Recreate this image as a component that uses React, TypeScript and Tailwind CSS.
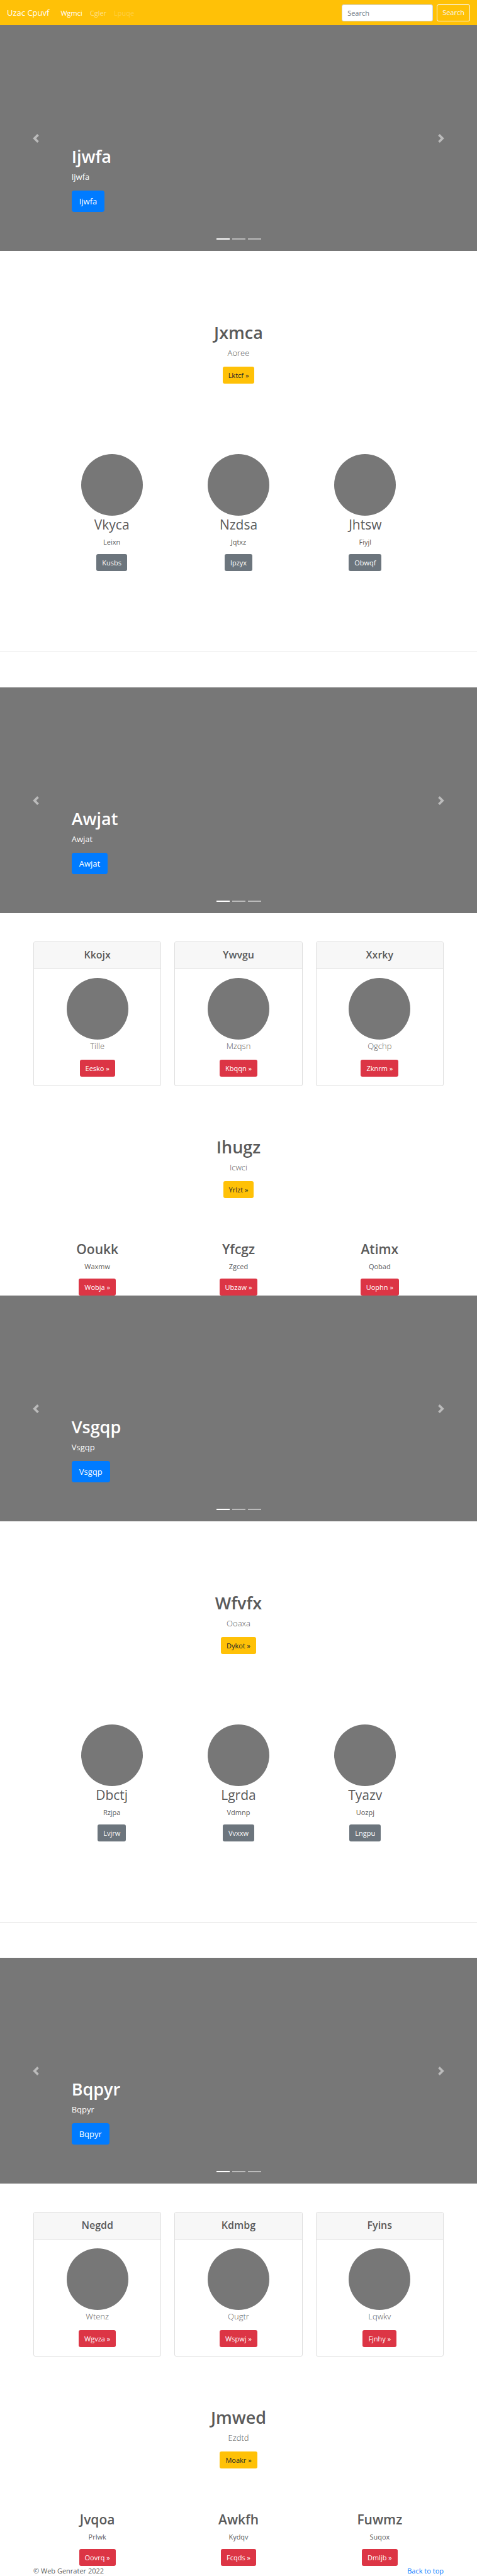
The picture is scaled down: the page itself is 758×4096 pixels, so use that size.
import type { ReactNode } from "react";

type Tone = "warning" | "secondary" | "danger";

const tones: Record<Tone, string> = {
  warning: "bg-[#ffc107] text-[#212529]",
  secondary: "bg-[#6c757d] text-white",
  danger: "bg-[#dc3545] text-white",
};

function Button({ tone, children }: { tone: Tone; children: ReactNode }) {
  return (
    <a href="#" className={`inline-block h-[27px] rounded-[3px] px-[9px] text-[11px] leading-[27px] ${tones[tone]}`}>
      {children}
    </a>
  );
}

function Navbar() {
  return (
    <nav className="flex h-[40px] items-center bg-[#ffc107] px-[11px]">
      <a href="#" className="mr-[12px] text-[13px] leading-[21px] text-white">Uzac Cpuvf</a>
      <div className="flex flex-1 text-[11px] leading-[17px]">
        <a href="#" className="px-[6px] text-white">Wgmci</a>
        <a href="#" className="px-[6px] text-white/50">Cgler</a>
        <a href="#" className="px-[6px] text-white/25">Lpuqe</a>
      </div>
      <form className="flex gap-[6px]" onSubmit={(e) => e.preventDefault()}>
        <input
          type="text"
          placeholder="Search"
          aria-label="Search"
          className="h-[27px] w-[145px] rounded-[3px] border border-[#ced4da] bg-white px-[8px] text-[11px] text-[#495057] placeholder:text-[#6c757d]"
        />
        <button type="submit" className="h-[27px] rounded-[3px] border border-[#f8f9fa] px-[8px] text-[11px] text-[#f8f9fa]">
          Search
        </button>
      </form>
    </nav>
  );
}

function Hero({ text }: { text: string }) {
  return (
    <section className="relative flex h-[359px] bg-[#777] text-white">
      <button type="button" aria-label="Previous" className="flex w-[15%] items-center justify-center opacity-50">
        <svg viewBox="0 0 8 8" className="size-[14px]" fill="#fff">
          <path d="M5.25 0l-4 4 4 4 1.5-1.5L4.25 4l2.5-2.5L5.25 0z" />
        </svg>
      </button>
      <div className="flex flex-1 flex-col items-start justify-end pb-[62px]">
        <h1 className="mb-[4px] text-[27px] font-semibold leading-[36px]">{text}</h1>
        <p className="mb-[11px] text-[13px] leading-[21px]">{text}</p>
        <a href="#" className="h-[34px] rounded-[4px] bg-[#007bff] px-[12px] text-[13px] leading-[34px]">{text}</a>
      </div>
      <button type="button" aria-label="Next" className="flex w-[15%] items-center justify-center opacity-50">
        <svg viewBox="0 0 8 8" className="size-[14px]" fill="#fff">
          <path d="M2.75 0l-1.5 1.5L3.75 4l-2.5 2.5L2.75 8l4-4-4-4z" />
        </svg>
      </button>
      <div className="absolute inset-x-0 bottom-[18px] flex justify-center gap-[4px]">
        <span className="h-[2px] w-[21px] bg-white" />
        <span className="h-[2px] w-[21px] bg-white/50" />
        <span className="h-[2px] w-[21px] bg-white/50" />
      </div>
    </section>
  );
}

function Intro({ title, lead, action }: { title: string; lead: string; action: string }) {
  return (
    <div className="flex flex-col items-center">
      <h2 className="mb-[4px] text-[27px] font-semibold leading-[36px]">{title}</h2>
      <p className="mb-[11px] text-[13px] font-light leading-[21px]">{lead}</p>
      <Button tone="warning">{action} »</Button>
    </div>
  );
}

type Item = [title: string, text: string, action: string];

function Circle() {
  return <div className="size-[98px] rounded-full bg-[#777]" />;
}

function Profiles({ items }: { items: Item[] }) {
  return (
    <div className="grid grid-cols-3 px-[77px]">
      {items.map(([title, text, action]) => (
        <div key={title} className="flex flex-col items-center">
          <Circle />
          <h2 className="mb-[5px] text-[21px] leading-[28px]">{title}</h2>
          <p className="mb-[11px] text-[11px] leading-[17px]">{text}</p>
          <Button tone="secondary">{action}</Button>
        </div>
      ))}
    </div>
  );
}

function Cards({ items }: { items: Item[] }) {
  return (
    <div className="grid grid-cols-3 gap-[21px] px-[53px]">
      {items.map(([title, text, action]) => (
        <article key={title} className="overflow-hidden rounded-[3px] border border-[#dfdfdf] text-center">
          <h4 className="border-b border-[#dfdfdf] bg-[#f7f7f7] pb-[12px] pt-[10px] text-[16px] font-semibold leading-[20px]">
            {title}
          </h4>
          <div className="flex flex-col items-center py-[14px]">
            <Circle />
            <p className="mb-[11px] text-[13px] font-light leading-[21px]">{text}</p>
            <Button tone="danger">{action} »</Button>
          </div>
        </article>
      ))}
    </div>
  );
}

function Features({ items }: { items: Item[] }) {
  return (
    <div className="grid grid-cols-3 gap-[21px] px-[53px]">
      {items.map(([title, text, action]) => (
        <div key={title} className="flex flex-col items-center">
          <h2 className="mb-[5px] text-[21px] font-semibold leading-[28px]">{title}</h2>
          <p className="mb-[11px] text-[11px] leading-[17px]">{text}</p>
          <Button tone="danger">{action} »</Button>
        </div>
      ))}
    </div>
  );
}

function ProfileSection({ intro, items }: { intro: Item; items: Item[] }) {
  return (
    <section className="flex flex-col gap-[112px] border-b border-[#e5e5e5] pb-[128px] pt-[112px]">
      <Intro title={intro[0]} lead={intro[1]} action={intro[2]} />
      <Profiles items={items} />
    </section>
  );
}

function CardSection({ cards, intro, features }: { cards: Item[]; intro: Item; features: Item[] }) {
  return (
    <section className="pt-[45px]">
      <Cards items={cards} />
      <div className="pb-[67px] pt-[79px]">
        <Intro title={intro[0]} lead={intro[1]} action={intro[2]} />
      </div>
      <Features items={features} />
    </section>
  );
}

export default function App() {
  return (
    <div className="bg-white font-['Open_Sans','Noto_Sans',sans-serif] text-[11px] text-[#5a5a5a]">
      <Navbar />
      <main>
        <Hero text="Ijwfa" />
        <ProfileSection
          intro={["Jxmca", "Aoree", "Lktcf"]}
          items={[
            ["Vkyca", "Leixn", "Kusbs"],
            ["Nzdsa", "Jqtxz", "Ipzyx"],
            ["Jhtsw", "Fiyjl", "Obwqf"],
          ]}
        />
        <div className="pt-[56px]">
          <Hero text="Awjat" />
        </div>
        <CardSection
          cards={[
            ["Kkojx", "Tille", "Eesko"],
            ["Ywvgu", "Mzqsn", "Kbqqn"],
            ["Xxrky", "Qgchp", "Zknrm"],
          ]}
          intro={["Ihugz", "Icwci", "Yrlzt"]}
          features={[
            ["Ooukk", "Waxmw", "Wobja"],
            ["Yfcgz", "Zgced", "Ubzaw"],
            ["Atimx", "Qobad", "Uophn"],
          ]}
        />
        <Hero text="Vsgqp" />
        <ProfileSection
          intro={["Wfvfx", "Ooaxa", "Dykot"]}
          items={[
            ["Dbctj", "Rzjpa", "Lvjrw"],
            ["Lgrda", "Vdmnp", "Vvxxw"],
            ["Tyazv", "Uozpj", "Lngpu"],
          ]}
        />
        <div className="pt-[56px]">
          <Hero text="Bqpyr" />
        </div>
        <CardSection
          cards={[
            ["Negdd", "Wtenz", "Wgvza"],
            ["Kdmbg", "Qugtr", "Wspwj"],
            ["Fyins", "Lqwkv", "Fjnhy"],
          ]}
          intro={["Jmwed", "Ezdtd", "Moakr"]}
          features={[
            ["Jvqoa", "Prlwk", "Oovrq"],
            ["Awkfh", "Kydqv", "Fcqds"],
            ["Fuwmz", "Suqox", "Dmljb"],
          ]}
        />
      </main>
      <footer className="flex justify-between px-[53px] leading-[16px]">
        <p>© Web Genrater 2022</p>
        <a href="#" className="text-[#007bff]">Back to top</a>
      </footer>
    </div>
  );
}
